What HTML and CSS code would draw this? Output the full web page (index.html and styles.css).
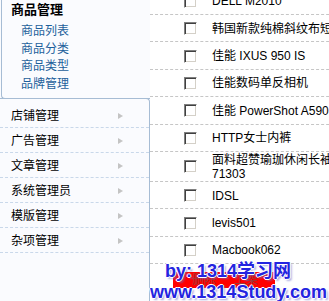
FILE: index.html
```html
<!DOCTYPE html>
<html lang="zh-CN">

<head>
    <meta charset="UTF-8">
    <title>商品管理</title>
    <link rel="stylesheet" href="styles.css">
</head>

<body>
    <div class="page">
        <!-- 左侧菜单 -->
        <aside class="menu">
            <div class="menu-open">
                <h3 class="menu-title">商品管理</h3>
                <ul class="sub-list">
                    <li><a href="#">商品列表</a></li>
                    <li><a href="#">商品分类</a></li>
                    <li><a href="#">商品类型</a></li>
                    <li><a href="#">品牌管理</a></li>
                </ul>
            </div>
            <ul class="menu-list">
                <li class="menu-item">店铺管理<i class="arrow"></i></li>
                <li class="menu-item">广告管理<i class="arrow"></i></li>
                <li class="menu-item">文章管理<i class="arrow"></i></li>
                <li class="menu-item">系统管理员<i class="arrow"></i></li>
                <li class="menu-item">模版管理<i class="arrow"></i></li>
                <li class="menu-item">杂项管理<i class="arrow"></i></li>
            </ul>
        </aside>

        <!-- 商品列表 -->
        <main class="content">
            <div class="goods">
                <div class="goods-row"><span class="check"></span><span class="name">DELL M2010</span></div>
                <div class="goods-row"><span class="check"></span><span class="name">韩国新款纯棉斜纹布短袖衬衫</span></div>
                <div class="goods-row"><span class="check"></span><span class="name">佳能 IXUS 950 IS</span></div>
                <div class="goods-row"><span class="check"></span><span class="name">佳能数码单反相机</span></div>
                <div class="goods-row"><span class="check"></span><span class="name">佳能 PowerShot A590 IS</span></div>
                <div class="goods-row"><span class="check"></span><span class="name">HTTP女士内裤</span></div>
                <div class="goods-row"><span class="check"></span><span class="name">面料超赞瑜珈休闲长袖T恤71303</span></div>
                <div class="goods-row"><span class="check"></span><span class="name">IDSL</span></div>
                <div class="goods-row"><span class="check"></span><span class="name">levis501</span></div>
                <div class="goods-row"><span class="check"></span><span class="name">Macbook062</span></div>
            </div>
            <div class="actions">
                <span>删除</span>
                <span>上架</span>
            </div>
        </main>

        <!-- 水印 -->
        <div class="watermark">
            <div class="wm-line wm-by">by: 1314学习网</div>
            <div class="wm-line">www.1314Study.com</div>
        </div>
    </div>
</body>

</html>
```

FILE: styles.css
```css
html,
body {
    margin: 0;
    padding: 0;
    overflow: hidden;
}

body {
    font-family: "Liberation Sans", "Noto Sans CJK SC", sans-serif;
    font-size: 12px;
    color: #000;
    background-color: #fff;
}

.page {
    position: relative;
    display: flex;
    width: 460px;
    height: 301px;
}

/* MENU */
.menu {
    flex: none;
    width: 150px;
    display: flex;
    flex-direction: column;
    background-color: #fafbfe;
}

.menu-open {
    position: relative;
    z-index: 1;
    margin-left: 1px;
    padding: 0 0 4px 9px;
    border-left: 1px solid #a6bcd4;
    border-bottom: 1px solid #a6bcd4;
    border-bottom-left-radius: 4px;
}

.menu-title {
    margin: 0;
    font-size: 13px;
    line-height: 19px;
    font-weight: bold;
}

.sub-list {
    list-style: none;
    margin: 4px 0 0;
    padding: 0 0 0 10px;
}

.sub-list a {
    display: block;
    line-height: 17.67px;
    color: #1d5f9b;
    text-decoration: none;
}

.menu-list {
    flex: 1;
    list-style: none;
    margin: -1px 0 0;
    padding: 4px 0 0;
    border-top: 1px solid #a6bcd4;
    border-right: 1px solid #a6bcd4;
    border-top-right-radius: 4px;
}

.menu-item {
    display: flex;
    align-items: center;
    justify-content: space-between;
    padding: 3px 26px 0 11px;
    line-height: 21px;
    border-bottom: 1px dashed #c9d8ea;
}

.arrow {
    width: 0;
    height: 0;
    border-left: 5px solid #c4c4c4;
    border-top: 3.5px solid transparent;
    border-bottom: 3.5px solid transparent;
}

/* LISTA */
.content {
    flex: none;
    width: 310px;
    background-color: #fff;
}

.goods-row {
    display: flex;
    align-items: center;
    box-sizing: border-box;
    min-height: 27.4px;
    padding: 1px 0 0 34px;
    border-bottom: 1px dashed #c6c6c6;
}

.goods-row:first-child {
    margin-top: -12.4px;
}

.check {
    flex: none;
    width: 11px;
    height: 11px;
    margin-right: 15px;
    border: 1px solid;
    border-color: #808080 #fff #fff #808080;
    box-shadow: inset 1px 1px #404040, inset -1px -1px #d4d0c8;
    background-color: #fff;
}

.name {
    width: 170px;
    line-height: 14px;
}

.actions {
    display: flex;
    gap: 18px;
    width: 102px;
    height: 16px;
    margin: 8px 0 0 23px;
    padding-left: 19px;
    box-sizing: border-box;
    line-height: 16px;
    background-color: #f00;
    color: #9a3b3b;
}

/* MARCA D'AGUA */
.watermark {
    position: absolute;
    left: 150px;
    top: 261px;
    font-family: "Liberation Sans", "Noto Sans CJK SC", sans-serif;
    font-size: 18px;
    font-weight: bold;
    line-height: 21px;
    color: #2424e0;
    white-space: nowrap;
    text-shadow: 1px 0 #fff, -1px 0 #fff, 0 1px #fff, 0 -1px #fff, 2px 2px 2px rgba(110, 110, 200, 0.6);
}

.wm-by {
    margin-left: 15px;
}
```
